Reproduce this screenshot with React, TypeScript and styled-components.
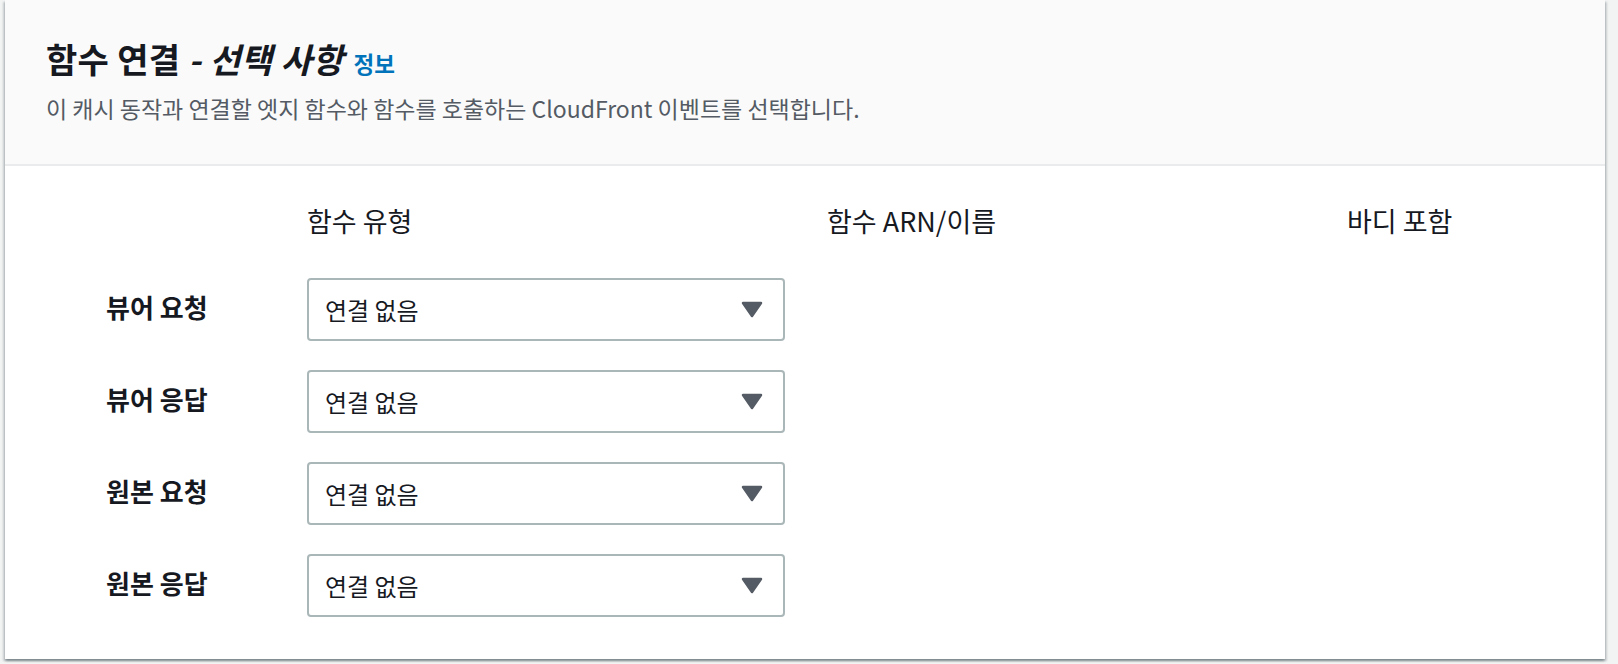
import React from "react";
import styled, { createGlobalStyle } from "styled-components";

const GlobalStyle = createGlobalStyle`
  html, body {
    margin: 0;
    padding: 0;
    background: #f2f3f3;
    font-family: "Noto Sans CJK KR", "Noto Sans", sans-serif;
    color: #16191f;
  }
`;

const Page = styled.div`
  width: 1618px;
  height: 664px;
  padding-left: 5px;
  box-sizing: border-box;
  background: #f2f3f3;
  overflow: hidden;
`;

const Panel = styled.section`
  width: 1600px;
  background: #ffffff;
  box-shadow: 0 2px 2px 0 rgba(0, 28, 36, 0.3), 2px 2px 2px 0 rgba(0, 28, 36, 0.15),
    -2px 2px 2px 0 rgba(0, 28, 36, 0.15);
`;

const Header = styled.header`
  background: #fafafa;
  border-bottom: 2px solid #e9ebed;
  padding: 39px 41px 0;
  height: 166px;
  box-sizing: border-box;
`;

const Title = styled.h2`
  margin: 0;
  font-size: 34px;
  line-height: 40px;
  height: 40px;
  font-weight: 700;
  letter-spacing: 0.3px;
  color: #16191f;
  white-space: nowrap;
`;

const Optional = styled.i`
  font-style: italic;
`;

const InfoLink = styled.a`
  font-size: 22.5px;
  line-height: 1;
  font-weight: 700;
  letter-spacing: 0;
  color: #0073bb;
  margin-left: 10px;
  text-decoration: none;
`;

const Description = styled.p`
  margin: 14px 0 0;
  font-size: 23px;
  line-height: 30px;
  color: #545b64;
  white-space: nowrap;
`;

const Body = styled.div`
  padding: 38px 0 42px 101px;
  display: grid;
  grid-template-columns: 201px 520px 520px 1fr;
  row-gap: 29px;
  align-items: center;
`;

const ColHead = styled.div`
  font-size: 27px;
  line-height: 34px;
  color: #16191f;
  margin-bottom: 11px;
  white-space: nowrap;
`;

const RowLabel = styled.div`
  font-size: 26px;
  line-height: 32px;
  font-weight: 700;
  color: #16191f;
  padding-bottom: 5px;
  white-space: nowrap;
`;

const Select = styled.div`
  width: 478px;
  height: 63px;
  box-sizing: border-box;
  border: 2px solid #aab7b8;
  border-radius: 4px;
  background: #ffffff;
  padding: 0 20px 0 16px;
  display: flex;
  align-items: center;
  justify-content: space-between;
  font-size: 24px;
  color: #16191f;
`;

const Empty = styled.div``;

const Caret = () => (
  <svg width="22" height="17" viewBox="0 0 22 17" aria-hidden="true">
    <polygon
      points="2,2 20,2 11,15"
      fill="#545b64"
      stroke="#545b64"
      strokeWidth="2.5"
      strokeLinejoin="round"
    />
  </svg>
);

const rows = ["뷰어 요청", "뷰어 응답", "원본 요청", "원본 응답"];

export default function App() {
  return (
    <>
      <GlobalStyle />
      <Page>
        <Panel>
          <Header>
            <Title>
              함수 연결 <Optional>- 선택 사항</Optional>
              <InfoLink href="#">정보</InfoLink>
            </Title>
            <Description>
              이 캐시 동작과 연결할 엣지 함수와 함수를 호출하는 CloudFront 이벤트를 선택합니다.
            </Description>
          </Header>
          <Body>
            <Empty />
            <ColHead>함수 유형</ColHead>
            <ColHead>함수 ARN/이름</ColHead>
            <ColHead>바디 포함</ColHead>
            {rows.map((r) => (
              <React.Fragment key={r}>
                <RowLabel>{r}</RowLabel>
                <Select>
                  <span>연결 없음</span>
                  <Caret />
                </Select>
                <Empty />
                <Empty />
              </React.Fragment>
            ))}
          </Body>
        </Panel>
      </Page>
    </>
  );
}
